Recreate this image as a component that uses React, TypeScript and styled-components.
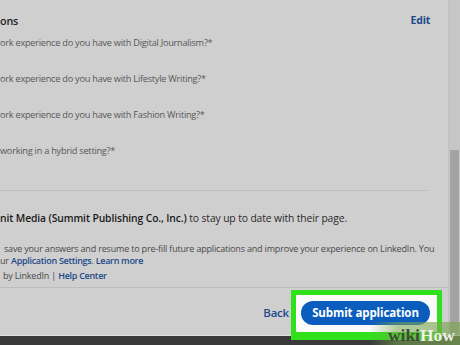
import styled, { createGlobalStyle } from 'styled-components';

const GlobalStyle = createGlobalStyle`
  html, body {
    margin: 0;
    padding: 0;
    background: #3b3b3b;
  }
  body {
    width: 460px;
    height: 345px;
    overflow: hidden;
    font-family: 'Open Sans', 'Noto Sans', sans-serif;
  }
`;

const Frame = styled.div`
  position: relative;
  display: flex;
  flex-direction: column;
  width: 460px;
  height: 345px;
  overflow: hidden;
`;

const Body = styled.div`
  display: flex;
  height: 335px;
  background: #cfcfcf;
`;

const Main = styled.div`
  display: flex;
  flex-direction: column;
  width: 448px;
`;

const Content = styled.div`
  display: flex;
  flex-direction: column;
  padding-right: 20px;
  flex: 1;
`;

const HeaderRow = styled.div`
  display: flex;
  justify-content: space-between;
  align-items: center;
  height: 32px;
  padding-top: 4px;
`;

const Heading = styled.h3`
  margin: 0;
  font-size: 10.8px;
  font-weight: 600;
  color: #1e1e1e;
  letter-spacing: -0.2px;
`;

const LinkText = styled.a<{ $size?: number }>`
  color: #1d4a8a;
  font-weight: 600;
  font-size: ${p => p.$size ?? 10}px;
  letter-spacing: -0.3px;
  text-decoration: none;
`;

const EditLink = styled(LinkText)`
  margin-right: -2px;
  font-weight: 700;
  letter-spacing: -0.2px;
`;

const Questions = styled.div`
  display: flex;
  flex-direction: column;
  padding-bottom: 10px;
  border-bottom: 1px solid #bebebe;
`;

const Question = styled.div`
  height: 36px;
  font-size: 9.2px;
  line-height: 14px;
  letter-spacing: -0.25px;
  color: #585858;
  white-space: nowrap;
`;

const Follow = styled.p`
  margin: 20px 0 0;
  font-size: 10.3px;
  line-height: 14px;
  letter-spacing: -0.1px;
  color: #2a2a2a;
  white-space: nowrap;
  strong {
    font-weight: 600;
    color: #1a1a1a;
  }
`;

const Note = styled.p<{ $gap: number; $indent?: number }>`
  margin: ${p => p.$gap}px 0 0;
  padding-left: ${p => p.$indent ?? 0}px;
  font-size: 9px;
  line-height: 12px;
  letter-spacing: -0.18px;
  color: #4a4a4a;
  white-space: nowrap;
`;

const Footer = styled.div`
  display: flex;
  justify-content: flex-end;
  align-items: center;
  gap: 12px;
  height: 46px;
  margin-top: 5px;
  padding: 2px 18px 0 0;
  border-top: 1px solid #bdbdbd;
`;

const BackButton = styled.span`
  color: #1d4a8a;
  font-size: 11.5px;
  font-weight: 600;
  letter-spacing: -0.2px;
`;

const ButtonWrap = styled.div`
  position: relative;
  display: flex;
`;

const Highlight = styled.div`
  position: absolute;
  left: -10px;
  top: -11px;
  right: -12px;
  bottom: -15px;
  border: 5px solid #2fe01a;
  border-bottom-width: 8px;
  background: #fafafa;
`;

const PrimaryButton = styled.button`
  position: relative;
  height: 24px;
  width: 129px;
  border: none;
  border-radius: 12px;
  background: #0b5dbd;
  color: #fff;
  font-family: inherit;
  font-size: 11.5px;
  font-weight: 700;
  letter-spacing: -0.1px;
  padding: 0;
`;

const Gutter = styled.div`
  display: flex;
  flex-direction: column;
  align-items: flex-start;
  width: 12px;
  background: #c6c6c6;
  border-left: 1px solid #c2c2c2;
`;

const Thumb = styled.div`
  margin-top: 150px;
  margin-left: 1px;
  width: 9px;
  height: 185px;
  background: #a3a3a3;
`;

const Taskbar = styled.div`
  height: 9px;
  background: #3a3a3a;
  border-top: 1px solid #e2e2e2;
`;

const Watermark = styled.div`
  position: absolute;
  right: 0;
  bottom: 0;
  width: 90px;
  height: 23px;
  display: flex;
  align-items: flex-end;
  justify-content: flex-end;
  padding: 0 5px 1px 0;
  background: linear-gradient(90deg, rgba(120, 165, 80, 0) 0%, rgba(120, 165, 80, 0.55) 30%, rgba(125, 165, 85, 0.7) 100%);
  font-family: 'Liberation Serif', serif;
  font-weight: 700;
  font-size: 17.5px;
  line-height: 18px;
  box-sizing: border-box;
`;

const Wiki = styled.span`
  color: #3d4a35;
`;

const How = styled.span`
  color: #eef0e6;
`;

export default function App() {
  return (
    <>
      <GlobalStyle />
      <Frame>
        <Body>
          <Main>
            <Content>
              <HeaderRow>
                <Heading>ons</Heading>
                <EditLink $size={10.5}>Edit</EditLink>
              </HeaderRow>
              <Questions>
                <Question>ork experience do you have with Digital Journalism?*</Question>
                <Question>ork experience do you have with Lifestyle Writing?*</Question>
                <Question>ork experience do you have with Fashion Writing?*</Question>
                <Question>working in a hybrid setting?*</Question>
              </Questions>
              <Follow>
                <strong>nit Media (Summit Publishing Co., Inc.)</strong> to stay up to date with their page.
              </Follow>
              <Note $gap={18} $indent={4}>
                save your answers and resume to pre-fill future applications and improve your experience on LinkedIn. You
              </Note>
              <Note $gap={0}>
                ur <LinkText $size={9}>Application Settings</LinkText>. <LinkText $size={9}>Learn more</LinkText>
              </Note>
              <Note $gap={3} $indent={3}>
                by LinkedIn | <LinkText $size={9}>Help Center</LinkText>
              </Note>
            </Content>
            <Footer>
              <BackButton>Back</BackButton>
              <ButtonWrap>
                <Highlight />
                <PrimaryButton>Submit application</PrimaryButton>
              </ButtonWrap>
            </Footer>
          </Main>
          <Gutter>
            <Thumb />
          </Gutter>
        </Body>
        <Taskbar />
        <Watermark>
          <Wiki>wiki</Wiki>
          <How>How</How>
        </Watermark>
      </Frame>
    </>
  );
}
